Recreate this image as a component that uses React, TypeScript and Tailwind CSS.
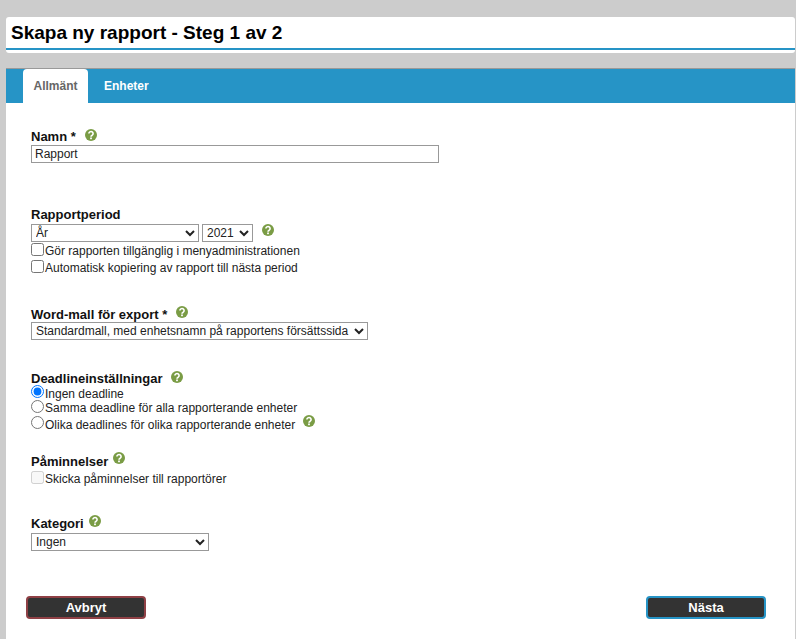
import React from "react";

const HelpIcon = ({ className = "" }: { className?: string }) => (
  <svg viewBox="0 0 12 12" className={`inline-block w-[12px] h-[12px] ${className}`}>
    <circle cx="6" cy="6" r="6" fill="#7a9c45" />
    <path
      d="M3.9 4.6a2.1 2 0 1 1 3.3 1.6c-.8.5-1.2.8-1.2 1.5"
      fill="none"
      stroke="#fff"
      strokeWidth="1.6"
    />
    <rect x="5.1" y="8.5" width="1.8" height="1.7" fill="#fff" />
  </svg>
);

const Label = ({ children, help }: { children: React.ReactNode; help?: string }) => (
  <div className="flex items-start h-[16px] text-[13px] leading-[16px] font-bold text-[#111]">
    <span>{children}</span>
    {help && <HelpIcon className={help} />}
  </div>
);

const selectClass =
  "h-[18px] border border-[#999] bg-white text-[12px] font-['Liberation_Sans',Arial,sans-serif] text-[#222] block";

export default function App() {
  return (
    <div className="min-h-[639px] h-[639px] overflow-hidden bg-[#cccccc] pt-[17px] pl-[6px] pr-[1px] font-['Liberation_Sans',Arial,sans-serif]">
      <div className="h-[36px] bg-white rounded-[3px] pt-[4px] px-[5px] relative">
        <h1 className="text-[19px] leading-[24px] font-bold text-black">
          Skapa ny rapport - Steg 1 av 2
        </h1>
        <div className="absolute left-0 right-0 top-[31px] h-[2px] bg-[#2694c6]" />
      </div>

      <div className="mt-[15px] h-[571px] bg-white border-t border-[#999]">
        <div className="h-[34px] bg-[#2694c6] flex pl-[17px]">
          <div className="w-[65px] h-[34px] bg-white rounded-t-[4px] text-[12px] font-bold text-[#666] flex items-center justify-center">
            Allmänt
          </div>
          <div className="ml-[16px] h-[34px] text-[12px] font-bold text-white flex items-center">
            Enheter
          </div>
        </div>

        <div className="pl-[25px] pt-[26px] text-[12px] leading-[16px] text-[#222]">
          <Label help="ml-[9px]">Namn *</Label>
          <input
            type="text"
            defaultValue="Rapport"
            className="block w-[408px] h-[18px] border border-[#999] px-[3px] text-[12px] text-[#222]"
          />

          <div className="mt-[44px]">
            <Label>Rapportperiod</Label>
          </div>
          <div className="flex items-start mt-[1px]">
            <select className={`${selectClass} w-[168px]`} defaultValue="År">
              <option>År</option>
            </select>
            <select className={`${selectClass} w-[51px] ml-[3px]`} defaultValue="2021">
              <option>2021</option>
            </select>
            <HelpIcon className="ml-[9px]" />
          </div>
          <label className="flex items-center h-[17px] -mt-[1px]">
            <input type="checkbox" className="m-0 w-[13px] h-[13px]" />
            <span className="ml-px mt-[2px]">Gör rapporten tillgänglig i menyadministrationen</span>
          </label>
          <label className="flex items-center h-[17px]">
            <input type="checkbox" className="m-0 w-[13px] h-[13px]" />
            <span className="ml-px mt-[2px]">Automatisk kopiering av rapport till nästa period</span>
          </label>

          <div className="mt-[32px]">
            <Label help="ml-[9px] -mt-[1px]">Word-mall för export *</Label>
          </div>
          <select className={`${selectClass} w-[337px] -mt-[1px]`} defaultValue="s">
            <option value="s">Standardmall, med enhetsnamn på rapportens försättssida</option>
          </select>

          <div className="mt-[31px]">
            <Label help="ml-[9px]">Deadlineinställningar</Label>
          </div>
          <label className="flex items-center h-[14px] -mt-[3px]">
            <input type="radio" name="deadline" defaultChecked className="m-0 w-[13px] h-[13px]" />
            <span className="ml-px mt-[6px]">Ingen deadline</span>
          </label>
          <label className="flex items-center h-[16px]">
            <input type="radio" name="deadline" className="m-0 w-[13px] h-[13px]" />
            <span className="ml-px mt-[4px]">Samma deadline för alla rapporterande enheter</span>
          </label>
          <label className="flex items-center h-[17px]">
            <input type="radio" name="deadline" className="m-0 w-[13px] h-[13px]" />
            <span className="ml-px mt-[4px]">Olika deadlines för olika rapporterande enheter</span>
            <HelpIcon className="ml-[8px] -mt-[3px]" />
          </label>

          <div className="mt-[23px]">
            <Label help="ml-[5px] -mt-[2px]">Påminnelser</Label>
          </div>
          <label className="flex items-center h-[17px] -mt-[1px]">
            <input type="checkbox" disabled className="m-0 w-[13px] h-[13px]" />
            <span className="ml-px mt-[2px]">Skicka påminnelser till rapportörer</span>
          </label>

          <div className="mt-[30px]">
            <Label help="ml-[5px] -mt-[1px]">Kategori</Label>
          </div>
          <select className={`${selectClass} w-[178px] mt-[1px]`} defaultValue="Ingen">
            <option>Ingen</option>
          </select>
        </div>

        <div className="flex justify-between pl-[20px] pr-[29px] mt-[45px]">
          <button className="w-[120px] h-[23px] bg-[#333] border-2 border-[#8f4045] rounded-[4px] text-white text-[13px] font-bold">
            Avbryt
          </button>
          <button className="w-[120px] h-[23px] bg-[#333] border-2 border-[#2694c6] rounded-[4px] text-white text-[13px] font-bold">
            Nästa
          </button>
        </div>
      </div>
    </div>
  );
}
